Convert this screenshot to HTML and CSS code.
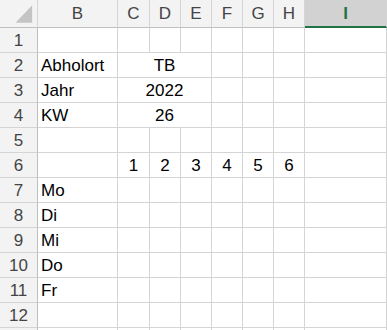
FILE: index.html
```html
<!DOCTYPE html>
<html lang="de">
<head>
    <meta charset="UTF-8">
    <meta name="viewport" content="width=device-width, initial-scale=1.0">
    <title>Mappe1</title>
    <link rel="stylesheet" href="styles.css">
</head>
<body>
    <div class="sheet">
        <!-- column headers -->
        <div class="hd corner">
            <svg width="38" height="28" viewBox="0 0 38 28"><polygon points="16,24 33,6 33,24" fill="#c4c4c4"/></svg>
        </div>
        <div class="hd col">B</div>
        <div class="hd col">C</div>
        <div class="hd col">D</div>
        <div class="hd col">E</div>
        <div class="hd col">F</div>
        <div class="hd col">G</div>
        <div class="hd col">H</div>
        <div class="hd col active">I</div>

        <!-- row 1 -->
        <div class="hd row">1</div>
        <div class="cell"></div><div class="cell"></div><div class="cell"></div><div class="cell"></div>
        <div class="cell"></div><div class="cell"></div><div class="cell"></div><div class="cell"></div>

        <!-- row 2 -->
        <div class="hd row">2</div>
        <div class="cell">Abholort</div>
        <div class="cell merged">TB</div>
        <div class="cell"></div><div class="cell"></div><div class="cell"></div><div class="cell"></div>

        <!-- row 3 -->
        <div class="hd row">3</div>
        <div class="cell">Jahr</div>
        <div class="cell merged">2022</div>
        <div class="cell"></div><div class="cell"></div><div class="cell"></div><div class="cell"></div>

        <!-- row 4 -->
        <div class="hd row">4</div>
        <div class="cell">KW</div>
        <div class="cell merged">26</div>
        <div class="cell"></div><div class="cell"></div><div class="cell"></div><div class="cell"></div>

        <!-- row 5 -->
        <div class="hd row">5</div>
        <div class="cell"></div><div class="cell"></div><div class="cell"></div><div class="cell"></div>
        <div class="cell"></div><div class="cell"></div><div class="cell"></div><div class="cell"></div>

        <!-- row 6 -->
        <div class="hd row">6</div>
        <div class="cell"></div>
        <div class="cell center">1</div>
        <div class="cell center">2</div>
        <div class="cell center">3</div>
        <div class="cell center">4</div>
        <div class="cell center">5</div>
        <div class="cell center">6</div>
        <div class="cell"></div>

        <!-- row 7 -->
        <div class="hd row">7</div>
        <div class="cell">Mo</div>
        <div class="cell"></div><div class="cell"></div><div class="cell"></div>
        <div class="cell"></div><div class="cell"></div><div class="cell"></div><div class="cell"></div>

        <!-- row 8 -->
        <div class="hd row">8</div>
        <div class="cell">Di</div>
        <div class="cell"></div><div class="cell"></div><div class="cell"></div>
        <div class="cell"></div><div class="cell"></div><div class="cell"></div><div class="cell"></div>

        <!-- row 9 -->
        <div class="hd row">9</div>
        <div class="cell">Mi</div>
        <div class="cell"></div><div class="cell"></div><div class="cell"></div>
        <div class="cell"></div><div class="cell"></div><div class="cell"></div><div class="cell"></div>

        <!-- row 10 -->
        <div class="hd row">10</div>
        <div class="cell">Do</div>
        <div class="cell"></div><div class="cell"></div><div class="cell"></div>
        <div class="cell"></div><div class="cell"></div><div class="cell"></div><div class="cell"></div>

        <!-- row 11 -->
        <div class="hd row">11</div>
        <div class="cell">Fr</div>
        <div class="cell"></div><div class="cell"></div><div class="cell"></div>
        <div class="cell"></div><div class="cell"></div><div class="cell"></div><div class="cell"></div>

        <!-- row 12 -->
        <div class="hd row">12</div>
        <div class="cell"></div><div class="cell"></div><div class="cell"></div><div class="cell"></div>
        <div class="cell"></div><div class="cell"></div><div class="cell"></div><div class="cell"></div>

        <!-- row 13, only its top edge is on screen -->
        <div class="hd row"></div>
        <div class="cell"></div><div class="cell"></div><div class="cell"></div><div class="cell"></div>
        <div class="cell"></div><div class="cell"></div><div class="cell"></div><div class="cell"></div>
    </div>
</body>
</html>
```

FILE: styles.css
```css
body {
    margin: 0;
    padding: 0;
    background: #fff;
    font-family: "Liberation Sans", Arial, sans-serif;
    overflow: hidden;
}

.sheet {
    display: grid;
    grid-template-columns: 38px 80px 32px 31px 31px 31px 31px 31px 82px;
    grid-template-rows: 28px repeat(13, 25px);
    font-size: 17px;
}

.sheet > div {
    box-sizing: border-box;
    display: flex;
    align-items: flex-end;
    line-height: 20px;
    padding-bottom: 1px;
    white-space: nowrap;
    overflow: hidden;
}

.hd {
    background: #f3f3f3;
    color: #444;
    justify-content: center;
    border-right: 1px solid #d5d5d5;
    border-bottom: 1px solid #bfbfbf;
}

.hd.col {
    padding-bottom: 3px;
}

.hd.row {
    border-right-color: #bfbfbf;
    border-bottom-color: #d5d5d5;
}

.corner {
    padding: 0 !important;
}

.corner svg {
    display: block;
}

.hd.active {
    background: #d2d2d2;
    color: #217346;
    font-weight: bold;
    border-bottom: 2px solid #217346;
    padding-bottom: 2px;
}

.cell {
    color: #000;
    padding-left: 3px;
    border-right: 1px solid #d4d4d4;
    border-bottom: 1px solid #d4d4d4;
}

.merged {
    grid-column: span 3;
    justify-content: center;
    padding-left: 0;
}

.center {
    justify-content: center;
    padding-left: 0;
}
```
